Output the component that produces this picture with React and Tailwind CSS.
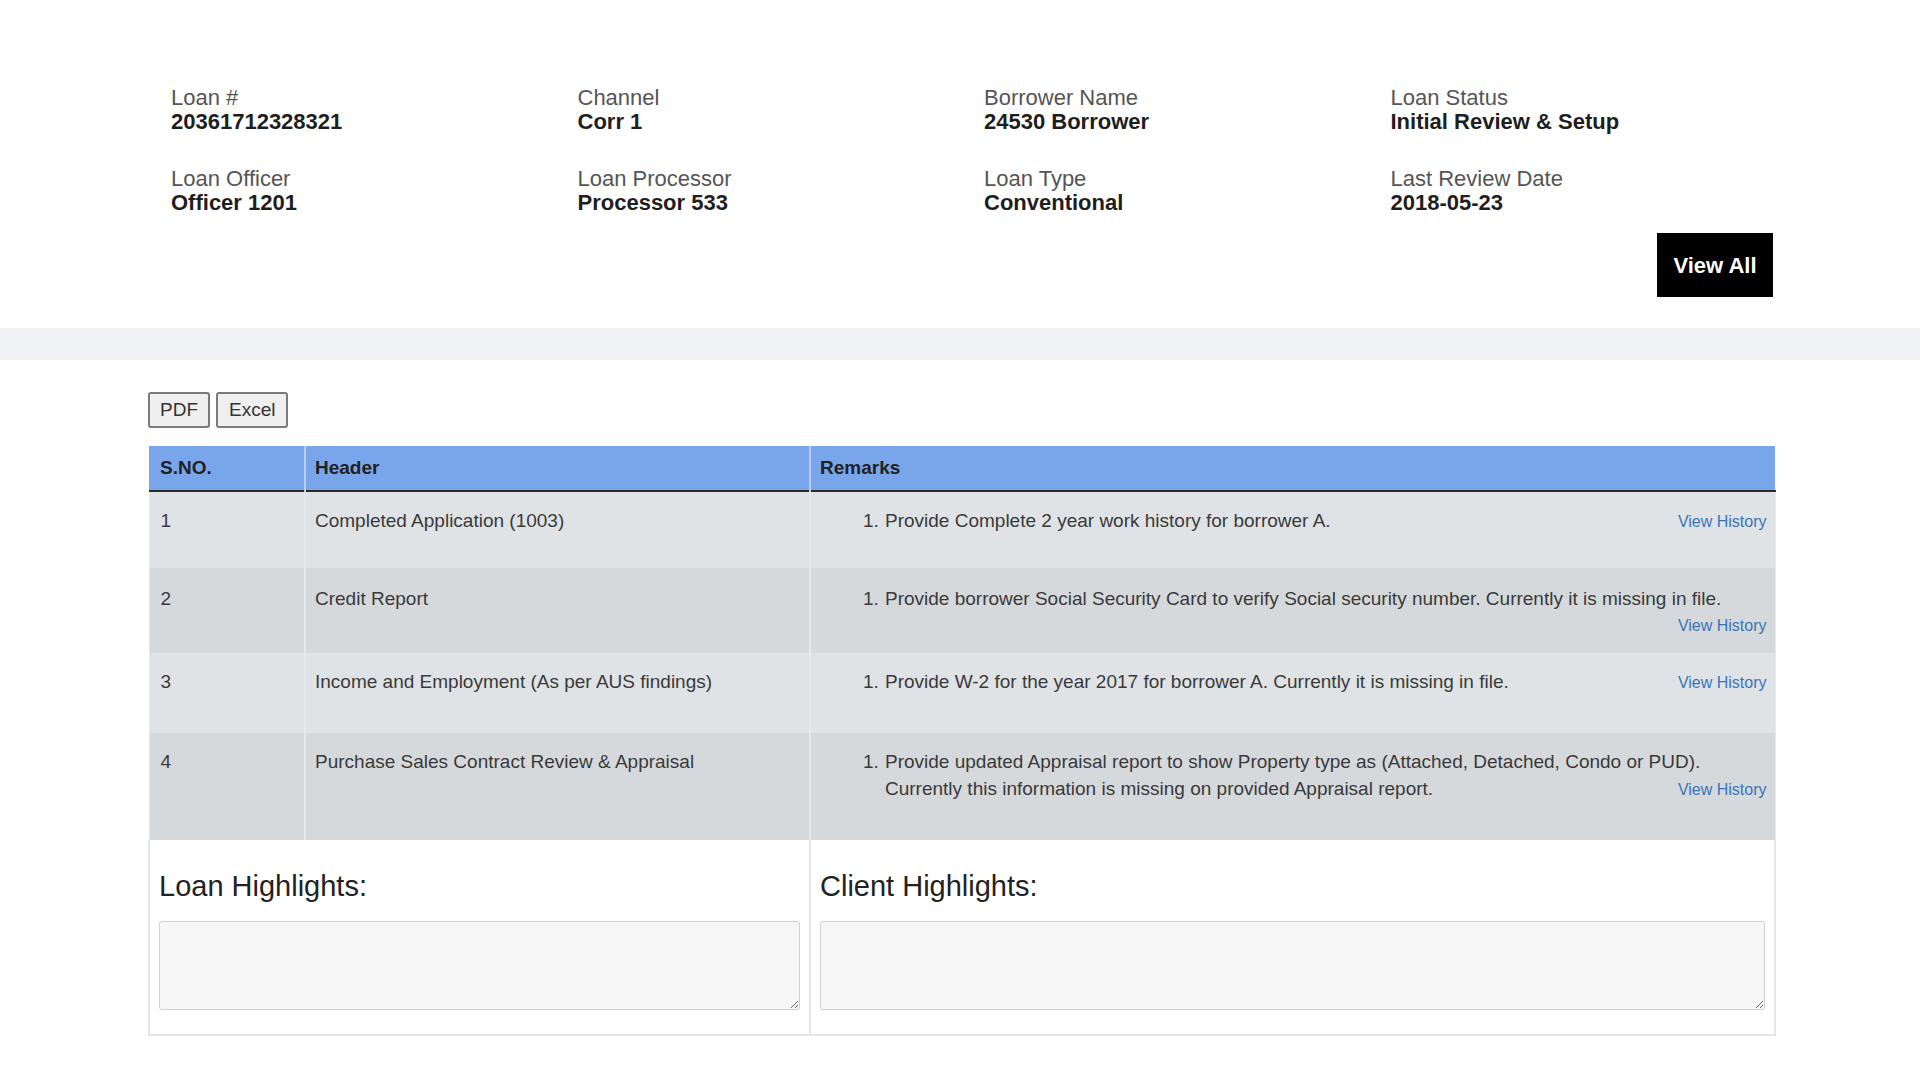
import { useState } from 'react';

const INFO = [
  { label: 'Loan #', value: '20361712328321' },
  { label: 'Channel', value: 'Corr 1' },
  { label: 'Borrower Name', value: '24530 Borrower' },
  { label: 'Loan Status', value: 'Initial Review & Setup' },
  { label: 'Loan Officer', value: 'Officer 1201' },
  { label: 'Loan Processor', value: 'Processor 533' },
  { label: 'Loan Type', value: 'Conventional' },
  { label: 'Last Review Date', value: '2018-05-23' },
];

// vh: 'inline' = link on the last text line, 'below' = link drops to its own line
const ROWS = [
  { no: 1, header: 'Completed Application (1003)', lines: ['Provide Complete 2 year work history for borrower A.'], vh: 'inline', h: 'h-[77px]', pt: 'pt-[15px]', bg: 'bg-[#dfe3e6]' },
  { no: 2, header: 'Credit Report', lines: ['Provide borrower Social Security Card to verify Social security number. Currently it is missing in file.'], vh: 'below', h: 'h-[85px]', pt: 'pt-[17px]', bg: 'bg-[#d5d9dc]' },
  { no: 3, header: 'Income and Employment (As per AUS findings)', lines: ['Provide W-2 for the year 2017 for borrower A. Currently it is missing in file.'], vh: 'inline', h: 'h-[80px]', pt: 'pt-[15px]', bg: 'bg-[#dfe3e6]' },
  {
    no: 4,
    header: 'Purchase Sales Contract Review & Appraisal',
    lines: [
      'Provide updated Appraisal report to show Property type as (Attached, Detached, Condo or PUD).',
      'Currently this information is missing on provided Appraisal report.',
    ],
    vh: 'inline',
    h: 'h-[107px]',
    pt: 'pt-[15px]',
    bg: 'bg-[#d5d9dc]',
  },
];

function ViewHistory() {
  return (
    <a href="#" className="text-[16px] leading-[27px] text-[#3b73b9] whitespace-nowrap">
      View History
    </a>
  );
}

function Remark({ lines, vh }) {
  const last = lines.length - 1;
  return (
    <div>
      <div className="flex pl-[52px]">
        <span className="w-[22px] shrink-0">1.</span>
        <div className="flex-1">
          {lines.map((l, i) =>
            i === last && vh === 'inline' ? (
              <div key={l} className="flex items-baseline justify-between">
                <span className="whitespace-nowrap">{l}</span>
                <ViewHistory />
              </div>
            ) : (
              <div key={l} className="whitespace-nowrap">{l}</div>
            )
          )}
        </div>
      </div>
      {vh === 'below' && (
        <div className="text-right leading-[20px]"><ViewHistory /></div>
      )}
    </div>
  );
}

export default function App() {
  const [loanNotes, setLoanNotes] = useState('');
  const [clientNotes, setClientNotes] = useState('');

  return (
    <div className="min-h-screen bg-white font-['Liberation_Sans',Arial,sans-serif] text-[#333]">
      {/* Loan summary */}
      <div className="mx-auto w-[1626px] pt-[86px]">
        <div className="grid grid-cols-4 gap-y-[33px]">
          {INFO.map((item) => (
            <div key={item.label} className="pl-[24px] text-[22px] leading-[24px]">
              <div className="text-[#555]">{item.label}</div>
              <div className="font-bold text-[#1e1e1e]">{item.value}</div>
            </div>
          ))}
        </div>
        <div className="flex justify-end pt-[18px]">
          <button className="h-[64px] w-[116px] bg-black text-[22px] font-bold text-white">
            View All
          </button>
        </div>
      </div>

      <div className="mt-[31px] h-[32px] bg-[#f0f2f5]" />

      <div className="mx-auto w-[1626px] pt-[32px] pb-[40px]">
        {/* Export */}
        <div className="flex gap-[6px] pl-[1px]">
          <button className="h-[36px] rounded-[3px] border-2 border-[#7a7a7a] bg-[#efefef] px-[10px] text-[19px] text-[#333]">
            PDF
          </button>
          <button className="h-[36px] rounded-[3px] border-2 border-[#7a7a7a] bg-[#efefef] px-[11px] text-[19px] text-[#333]">
            Excel
          </button>
        </div>

        {/* Review table */}
        <table className="mt-[18px] ml-[1px] w-[1626px] table-fixed border-collapse text-[19px] leading-[27px] text-[#3a3a3a]">
          <colgroup>
            <col className="w-[156px]" />
            <col className="w-[505px]" />
            <col className="w-[965px]" />
          </colgroup>
          <thead>
            <tr className="h-[45px] border-b-2 border-[#2b2b2b] bg-[#79a6eb] text-left">
              <th className="pl-[11px] pb-[2px] font-bold text-[#222]">S.NO.</th>
              <th className="border-l-2 border-[#b9cff2] pl-[9px] pb-[2px] font-bold text-[#222]">Header</th>
              <th className="border-l-2 border-[#b9cff2] pl-[9px] pb-[2px] font-bold text-[#222]">Remarks</th>
            </tr>
          </thead>
          <tbody>
            {ROWS.map((r) => (
              <tr key={r.no} className={`${r.bg} ${r.h} align-top`}>
                <td className={`border-l border-[#e6e8ea] ${r.pt} pl-[11px]`}>{r.no}</td>
                <td className={`border-l-2 border-[#e6e8ea] ${r.pt} pl-[9px]`}>{r.header}</td>
                <td className={`border-l-2 border-r border-[#e6e8ea] ${r.pt} pr-[8px]`}>
                  <Remark lines={r.lines} vh={r.vh} />
                </td>
              </tr>
            ))}
            <tr className="bg-white align-top">
              <td colSpan={2} className="border-2 border-t-0 border-[#e3e5e7] px-[9px] pt-[29px] pb-[24px]">
                <h3 className="text-[29px] leading-[34px] text-[#222]">Loan Highlights:</h3>
                <textarea
                  value={loanNotes}
                  onChange={(e) => setLoanNotes(e.target.value)}
                  className="mt-[18px] block h-[89px] w-full rounded-[3px] border border-[#cfcfcf] bg-[#f7f7f7]"
                />
              </td>
              <td className="border-2 border-t-0 border-[#e3e5e7] px-[9px] pt-[29px] pb-[24px]">
                <h3 className="text-[29px] leading-[34px] text-[#222]">Client Highlights:</h3>
                <textarea
                  value={clientNotes}
                  onChange={(e) => setClientNotes(e.target.value)}
                  className="mt-[18px] block h-[89px] w-full rounded-[3px] border border-[#cfcfcf] bg-[#f7f7f7]"
                />
              </td>
            </tr>
          </tbody>
        </table>
      </div>
    </div>
  );
}
